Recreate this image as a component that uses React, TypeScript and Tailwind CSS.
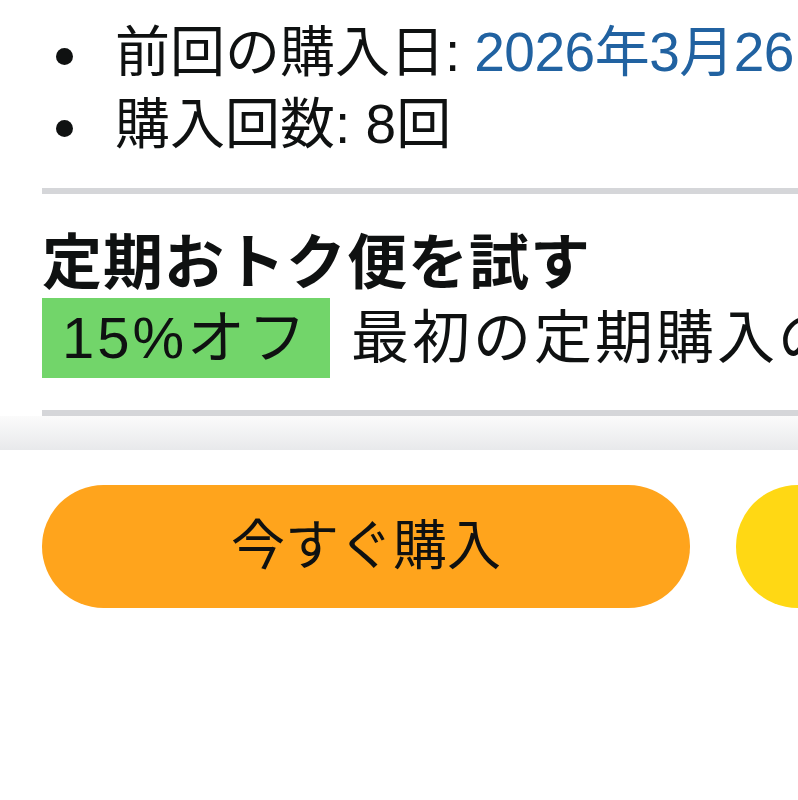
import React from "react";

const font = "font-['Liberation_Sans','Noto_Sans_CJK_JP',sans-serif]";

function Bullet({ children }: { children: React.ReactNode }) {
  return (
    <li className="flex items-center h-[72px] whitespace-nowrap">
      <span className="w-[73px] flex-none pl-[14px] pt-[8px]">
        <span className="block w-[17px] h-[17px] rounded-full bg-[#0f1111]" />
      </span>
      <span className="text-[55px] leading-[72px]">{children}</span>
    </li>
  );
}

export default function App() {
  return (
    <div className={`${font} w-[798px] h-[800px] overflow-hidden bg-white text-[#0f1111]`}>
      <div className="pl-[42px] pt-[16px]">
        <ul>
          <Bullet>
            前回の購入日:<span className="ml-[14px] tracking-[-0.5px] text-[#2162a1]">2026年3月26日</span>
          </Bullet>
          <Bullet>購入回数: 8回</Bullet>
        </ul>

        <div className="mt-[28px] h-[6px] bg-[#d5d6d9]" />

        <h2 className="mt-[36px] text-[60px] leading-[68px] font-bold tracking-[1px] whitespace-nowrap">
          定期おトク便を試す
        </h2>

        <div className="flex items-center h-[80px] whitespace-nowrap tracking-[3px] text-[58px]">
          <span className="h-[80px] leading-[80px] bg-[#72d56a] pl-[20px] pr-[21px]">15%オフ</span>
          <span className="ml-[21px] leading-[80px]">最初の定期購入の特典</span>
        </div>

        <div className="mt-[32px] h-[6px] bg-[#d5d6d9]" />
      </div>

      <div className="h-[34px] bg-gradient-to-b from-[#fbfbfb] to-[#e8e9eb]" />

      <div className="bg-white pt-[35px] pl-[42px] flex gap-[46px]">
        <button className="flex-none w-[648px] h-[123px] rounded-full bg-[#ffa41c] text-[54px] text-[#0f1111] flex items-center justify-center">
          今すぐ購入
        </button>
        <button className="flex-none w-[648px] h-[123px] rounded-full bg-[#ffd814] text-[54px] text-[#0f1111]">
          カートに入れる
        </button>
      </div>
    </div>
  );
}
